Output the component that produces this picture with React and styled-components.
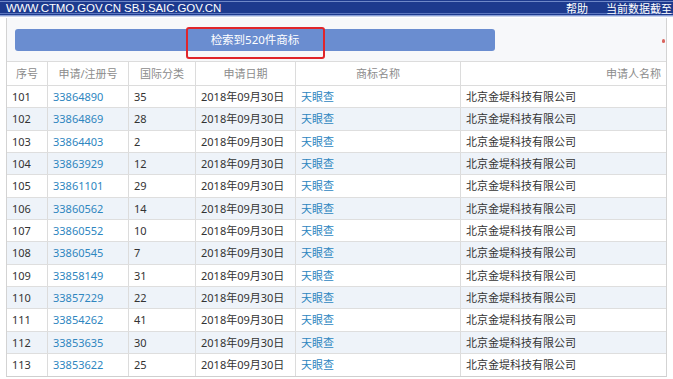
import styled, { createGlobalStyle } from "styled-components";

const GlobalStyle = createGlobalStyle`
    body{
        margin: 0;
        background: #fff;
        overflow: hidden;
        font-family: "Noto Sans", "Noto Sans CJK SC", sans-serif;
    }
`

const rows = [
    ["101", "33864890", "35"],
    ["102", "33864869", "28"],
    ["103", "33864403", "2"],
    ["104", "33863929", "12"],
    ["105", "33861101", "29"],
    ["106", "33860562", "14"],
    ["107", "33860552", "10"],
    ["108", "33860545", "7"],
    ["109", "33858149", "31"],
    ["110", "33857229", "22"],
    ["111", "33854262", "41"],
    ["112", "33853635", "30"],
    ["113", "33853622", "25"],
];

const columns = "41px 81px 67px 100px 165px 1fr";

export default function App() {
    return (
        <Page>
            <GlobalStyle />
            <TopBar>
                <Site>WWW.CTMO.GOV.CN SBJ.SAIC.GOV.CN</Site>
                <TopLinks>
                    <span>帮助</span>
                    <span>当前数据截至：2018年</span>
                </TopLinks>
            </TopBar>

            <Panel>
                <Toolbar>
                    <ResultButton>检索到520件商标</ResultButton>
                    <Highlight />
                    <EdgeMark />
                </Toolbar>

                <HeadRow>
                    <HeadCell>序号</HeadCell>
                    <HeadCell>申请/注册号</HeadCell>
                    <HeadCell>国际分类</HeadCell>
                    <HeadCell>申请日期</HeadCell>
                    <HeadCell>商标名称</HeadCell>
                    <HeadCell $align="right">申请人名称</HeadCell>
                </HeadRow>

                {rows.map(([no, reg, cls], i) => (
                    <Row key={no} $alt={i % 2 === 1}>
                        <Cell>{no}</Cell>
                        <Cell $link>{reg}</Cell>
                        <Cell>{cls}</Cell>
                        <Cell>2018年09月30日</Cell>
                        <Cell $link>天眼查</Cell>
                        <Cell>北京金堤科技有限公司</Cell>
                    </Row>
                ))}
            </Panel>
        </Page>
    );
}

const Page = styled.div`
    width: 673px;
    height: 379px;
    overflow: hidden;
`

const TopBar = styled.div`
    height: 17px;
    display: flex;
    align-items: center;
    padding-left: 6px;
    box-sizing: border-box;
    background:
        linear-gradient(to bottom,
            #1d3a8e 0px, #1d3a8e 1px,
            #6f88c8 1px, #6f88c8 2px,
            #1d3a8e 2px, #1d3a8e 13px,
            #5c77c0 13px, #5c77c0 14px,
            #1d3a8e 14px, #1d3a8e 15px,
            #8aa0d8 15px, #8aa0d8 16px,
            #2a4aa0 16px);
    color: #fff;
    white-space: nowrap;
    border-bottom: 1px solid #c9d3ea;
    overflow: hidden;
`

const Site = styled.div`
    font-family: "Liberation Sans", Arial, sans-serif;
    font-size: 11.5px;
    letter-spacing: -0.1px;
`

const TopLinks = styled.div`
    margin-left: auto;
    flex-shrink: 0;
    width: 107px;
    overflow: hidden;
    display: flex;
    gap: 18px;
    font-size: 11px;
`

const Panel = styled.div`
    margin: 1px 6px 0 6px;
    border-left: 1px solid #d3d3d3;
    border-right: 1px solid #d3d3d3;
    border-bottom: 1px solid #cfcfcf;
`

const Toolbar = styled.div`
    position: relative;
    height: 44px;
    padding: 11px 0 0 8px;
    box-sizing: border-box;
    background: #f7f8fa;
    border-bottom: 1px solid #dcdcdc;
`

const ResultButton = styled.div`
    width: 480px;
    height: 22px;
    border-radius: 3px;
    background: #6a8dd0;
    color: #fff;
    font-size: 11.5px;
    line-height: 22px;
    text-align: center;
`

const Highlight = styled.div`
    position: absolute;
    left: 179px;
    top: 9px;
    width: 139px;
    height: 32px;
    box-sizing: border-box;
    border: 2px solid #e0252b;
    border-radius: 3px;
`

const EdgeMark = styled.div`
    position: absolute;
    right: 1px;
    top: 21px;
    width: 3px;
    height: 4px;
    border-radius: 2px;
    background: #d9645e;
`

const HeadRow = styled.div`
    display: grid;
    grid-template-columns: ${columns};
    height: 23px;
    background: #fff;
    border-bottom: 1px solid #dcdcdc;
`

const HeadCell = styled.div`
    border-right: 1px solid #dcdcdc;
    color: #8c8c8c;
    font-size: 11px;
    line-height: 23px;
    text-align: ${p => p.$align || "center"};
    padding: 0 5px;
    white-space: nowrap;
    &:last-child{ border-right: none; }
`

const Row = styled.div`
    display: grid;
    grid-template-columns: ${columns};
    height: 22.33px;
    box-sizing: border-box;
    background: ${p => (p.$alt ? "#eef3f9" : "#fff")};
    border-bottom: 1px solid #dedede;
    &:last-child{ border-bottom: none; }
`

const Cell = styled.div`
    border-right: 1px solid #dcdcdc;
    color: ${p => (p.$link ? "#2e86bf" : "#333")};
    font-size: 11px;
    line-height: 21px;
    padding: 0 5px;
    white-space: nowrap;
    overflow: hidden;
    &:last-child{ border-right: none; }
`
